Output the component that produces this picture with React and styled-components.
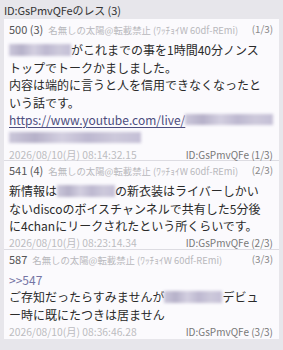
import styled, { createGlobalStyle } from "styled-components";

const GlobalStyle = createGlobalStyle`
  html, body {
    margin: 0;
    padding: 0;
    background: #e7e6eb;
  }
  body {
    font-family: "Noto Sans CJK JP", "Noto Sans", sans-serif;
    color: #222;
  }
`;

const posts = [
  {
    no: "500",
    count: "(3)",
    seq: "(1/3)",
    date: "2026/08/10(月) 08:14:32.15",
    lines: [
      [{ blur: 62 }, "がこれまでの事を1時間40分ノンス"],
      ["トップでトークかましました。"],
      ["内容は端的に言うと人を信用できなくなったと"],
      ["いう話です。"],
      [{ link: "https://www.youtube.com/live/" }, { blur: 90, link: true }],
      [{ blur: 132, link: true }],
    ],
  },
  {
    no: "541",
    count: "(4)",
    seq: "(2/3)",
    date: "2026/08/10(月) 08:23:14.34",
    lines: [
      ["新情報は", { blur: 58 }, "の新衣装はライバーしかい"],
      ["ないdiscoのボイスチャンネルで共有した5分後"],
      ["に4chanにリークされたという所くらいです。"],
    ],
  },
  {
    no: "587",
    count: "",
    seq: "(3/3)",
    date: "2026/08/10(月) 08:36:46.28",
    lines: [
      [{ anchor: ">>547" }],
      ["ご存知だったらすみませんが", { blur: 58 }, "デビュ"],
      ["ー時に既にたつきは居ません"],
    ],
  },
];

export default function App() {
  return (
    <>
      <GlobalStyle />
      <Page>
        <Title>ID:GsPmvQFeのレス (3)</Title>
        <Card>
          {posts.map((p) => (
            <Post key={p.no}>
              <Meta>
                <MetaLeft>
                  <Num>
                    {p.no}
                    {p.count && ` ${p.count}`}
                  </Num>
                  <Name>名無しの太陽@転載禁止 (ﾜｯﾁｮｲW 60df-REmi)</Name>
                </MetaLeft>
                <Seq>{p.seq}</Seq>
              </Meta>
              <Body>
                {p.lines.map((line, i) => (
                  <Line key={i}>
                    {line.map((part, j) => {
                      if (typeof part === "string") return <span key={j}>{part}</span>;
                      if (part.blur) return <Blur key={j} $w={part.blur} $link={part.link} />;
                      if (part.link) return <Link key={j}>{part.link}</Link>;
                      return <Anchor key={j}>{part.anchor}</Anchor>;
                    })}
                  </Line>
                ))}
              </Body>
              <Footer>
                <Date>{p.date}</Date>
                <Id>ID:GsPmvQFe {p.seq}</Id>
              </Footer>
            </Post>
          ))}
        </Card>
      </Page>
    </>
  );
}

const Page = styled.div`
  padding: 4px 4px 10px 4px;
`;

const Title = styled.div`
  font-size: 11px;
  line-height: 12px;
  color: #333;
  margin-bottom: 3px;
  letter-spacing: -0.1px;
`;

const Card = styled.div`
  background: #fbfafd;
  width: 275px;
  padding-top: 1px;
  padding-bottom: 1px;
`;

const Post = styled.div`
  padding: 3px 6px 0 5px;
  border-bottom: 1px solid #dddce2;

  &:last-child {
    border-bottom: none;
    padding-bottom: 1px;
  }
`;

const Meta = styled.div`
  display: flex;
  align-items: center;
  justify-content: space-between;
  height: 12px;
  white-space: nowrap;
`;

const MetaLeft = styled.div`
  display: flex;
  align-items: baseline;
  gap: 5px;
`;

const Num = styled.span`
  font-size: 11px;
  color: #555;
`;

const Name = styled.span`
  font-size: 9.4px;
  color: #b8b8bc;
`;

const Seq = styled.span`
  font-size: 9.8px;
  color: #888;
`;

const Body = styled.div`
  margin-top: 6px;
  font-size: 12px;
  line-height: 17.5px;
  color: #2a2a2a;
`;

const Line = styled.div`
  display: flex;
  align-items: center;
  height: 17.5px;
  white-space: nowrap;
`;

const Blur = styled.span`
  display: inline-block;
  width: ${(p) => p.$w}px;
  height: ${(p) => (p.$link ? 11 : 12)}px;
  background: linear-gradient(
    90deg,
    #cbc7da 0%,
    #b6b1c9 20%,
    #d3cfe0 40%,
    #bdb8d0 60%,
    #cdc9db 80%,
    #c4bfd6 100%
  );
  filter: blur(1.8px);
`;

const Link = styled.span`
  color: #4d4d7d;
  text-decoration: underline;
  text-underline-offset: 2px;
`;

const Anchor = styled.span`
  color: #7474a4;
`;

const Footer = styled.div`
  display: flex;
  justify-content: space-between;
  align-items: center;
  height: 12px;
  margin-top: 2px;
  white-space: nowrap;
`;

const Date = styled.span`
  font-size: 10.3px;
  color: #bcbcc0;
`;

const Id = styled.span`
  font-size: 10px;
  color: #777;
`;
